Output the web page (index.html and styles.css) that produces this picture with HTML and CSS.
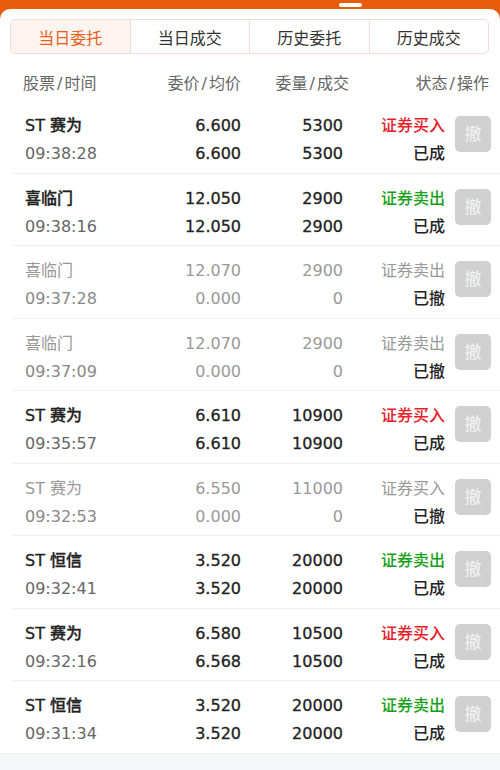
FILE: index.html
```html
<!DOCTYPE html>
<html lang="zh-CN">
<head>
  <meta charset="UTF-8" />
  <meta name="viewport" content="width=device-width, initial-scale=1.0" />
  <title>委托查询</title>
  <link rel="stylesheet" href="styles.css">
</head>
<body>
  <div class="top-bar"><span class="handle"></span></div>
  <div class="panel">
    <div class="tabs">
      <div class="tab active">当日委托</div>
      <div class="tab">当日成交</div>
      <div class="tab">历史委托</div>
      <div class="tab">历史成交</div>
    </div>

    <div class="head">
      <span class="c-name">股票<i>/</i>时间</span>
      <span class="c-price">委价<i>/</i>均价</span>
      <span class="c-vol">委量<i>/</i>成交</span>
      <span class="c-state">状态<i>/</i>操作</span>
    </div>

    <div class="list">
      <div class="row">
        <div class="c-name"><b>ST 赛为</b><span class="time">09:38:28</span></div>
        <div class="c-price"><span>6.600</span><span>6.600</span></div>
        <div class="c-vol"><span>5300</span><span>5300</span></div>
        <div class="c-state"><span class="buy">证券买入</span><span>已成</span></div>
        <div class="cancel">撤</div>
      </div>
      <div class="row">
        <div class="c-name"><b>喜临门</b><span class="time">09:38:16</span></div>
        <div class="c-price"><span>12.050</span><span>12.050</span></div>
        <div class="c-vol"><span>2900</span><span>2900</span></div>
        <div class="c-state"><span class="sell">证券卖出</span><span>已成</span></div>
        <div class="cancel">撤</div>
      </div>
      <div class="row off">
        <div class="c-name"><b>喜临门</b><span class="time">09:37:28</span></div>
        <div class="c-price"><span>12.070</span><span>0.000</span></div>
        <div class="c-vol"><span>2900</span><span>0</span></div>
        <div class="c-state"><span>证券卖出</span><span class="done">已撤</span></div>
        <div class="cancel">撤</div>
      </div>
      <div class="row off">
        <div class="c-name"><b>喜临门</b><span class="time">09:37:09</span></div>
        <div class="c-price"><span>12.070</span><span>0.000</span></div>
        <div class="c-vol"><span>2900</span><span>0</span></div>
        <div class="c-state"><span>证券卖出</span><span class="done">已撤</span></div>
        <div class="cancel">撤</div>
      </div>
      <div class="row">
        <div class="c-name"><b>ST 赛为</b><span class="time">09:35:57</span></div>
        <div class="c-price"><span>6.610</span><span>6.610</span></div>
        <div class="c-vol"><span>10900</span><span>10900</span></div>
        <div class="c-state"><span class="buy">证券买入</span><span>已成</span></div>
        <div class="cancel">撤</div>
      </div>
      <div class="row off">
        <div class="c-name"><b>ST 赛为</b><span class="time">09:32:53</span></div>
        <div class="c-price"><span>6.550</span><span>0.000</span></div>
        <div class="c-vol"><span>11000</span><span>0</span></div>
        <div class="c-state"><span>证券买入</span><span class="done">已撤</span></div>
        <div class="cancel">撤</div>
      </div>
      <div class="row">
        <div class="c-name"><b>ST 恒信</b><span class="time">09:32:41</span></div>
        <div class="c-price"><span>3.520</span><span>3.520</span></div>
        <div class="c-vol"><span>20000</span><span>20000</span></div>
        <div class="c-state"><span class="sell">证券卖出</span><span>已成</span></div>
        <div class="cancel">撤</div>
      </div>
      <div class="row">
        <div class="c-name"><b>ST 赛为</b><span class="time">09:32:16</span></div>
        <div class="c-price"><span>6.580</span><span>6.568</span></div>
        <div class="c-vol"><span>10500</span><span>10500</span></div>
        <div class="c-state"><span class="buy">证券买入</span><span>已成</span></div>
        <div class="cancel">撤</div>
      </div>
      <div class="row">
        <div class="c-name"><b>ST 恒信</b><span class="time">09:31:34</span></div>
        <div class="c-price"><span>3.520</span><span>3.520</span></div>
        <div class="c-vol"><span>20000</span><span>20000</span></div>
        <div class="c-state"><span class="sell">证券卖出</span><span>已成</span></div>
        <div class="cancel">撤</div>
      </div>
    </div>
  </div>
</body>
</html>
```

FILE: styles.css
```css
body {
  margin: 0;
  background: #f5f6f8;
  font-family: "DejaVu Sans", "Noto Sans CJK SC", sans-serif;
  font-size: 16px;
  color: #222;
}
.top-bar { background: #e85a0c; height: 20px; position: relative; }
.handle {
  position: absolute;
  left: 339px;
  top: 3px;
  width: 23px;
  height: 4px;
  border-radius: 2px;
  background: #fff;
}
.panel {
  background: #fff;
  margin-top: -11px;
  border-radius: 10px 10px 0 0;
  padding-top: 10px;
  position: relative;
}
.tabs {
  display: flex;
  margin: 0 11px 0 10px;
  height: 33px;
  border: 1px solid #efdcd6;
  border-radius: 5px;
  overflow: hidden;
}
.tab {
  flex: 1;
  display: flex;
  align-items: center;
  justify-content: center;
  color: #333;
  border-left: 1px solid #efdcd6;
}
.tab:first-child { border-left: none; }
.tab.active { background: #fdf4ef; color: #e8601a; }

.row {
  display: grid;
  grid-template-columns: 120px 96px 102px 102px 36px;
}
.head {
  display: grid;
  grid-template-columns: 122px 96px 108px 140px;
  height: 38px;
  align-items: center;
  padding: 9px 0 0 23px;
  color: #666;
}
.head i { font-style: normal; margin: 0 2px; }
.head .c-price, .head .c-vol, .head .c-state { text-align: right; }

.list { margin-left: 12px; }
.row {
  padding: 11px 0 4.5px 13px;
  border-bottom: 1px solid #f0f0f0;
  line-height: 28px;
}
.row:last-child { border-bottom: none; }
.row > div:not(.cancel) { display: flex; flex-direction: column; }
.c-name b { font-weight: 500; -webkit-text-stroke: 0.3px #222; }
.time { color: #666; }
.row .c-price, .row .c-vol, .row .c-state { align-items: flex-end; }
.row .c-price span, .row .c-vol span { color: #222; -webkit-text-stroke: 0.3px #222; }
.row .c-state span { font-weight: 500; }
.buy { color: #e6212a; }
.sell { color: #17a017; }
.cancel {
  margin: 4px 0 0 10px;
  width: 36px;
  height: 36px;
  border-radius: 5px;
  background: #d0d0d0;
  color: #f4f4f4;
  font-size: 17px;
  line-height: 36px;
  text-align: center;
}
.row.off b, .row.off .c-price span, .row.off .c-vol span, .row.off .c-state span { color: #999; font-weight: 400; -webkit-text-stroke: 0; }
.row.off .time { color: #888; }
.row.off .c-state .done { color: #222; font-weight: 500; }
```
